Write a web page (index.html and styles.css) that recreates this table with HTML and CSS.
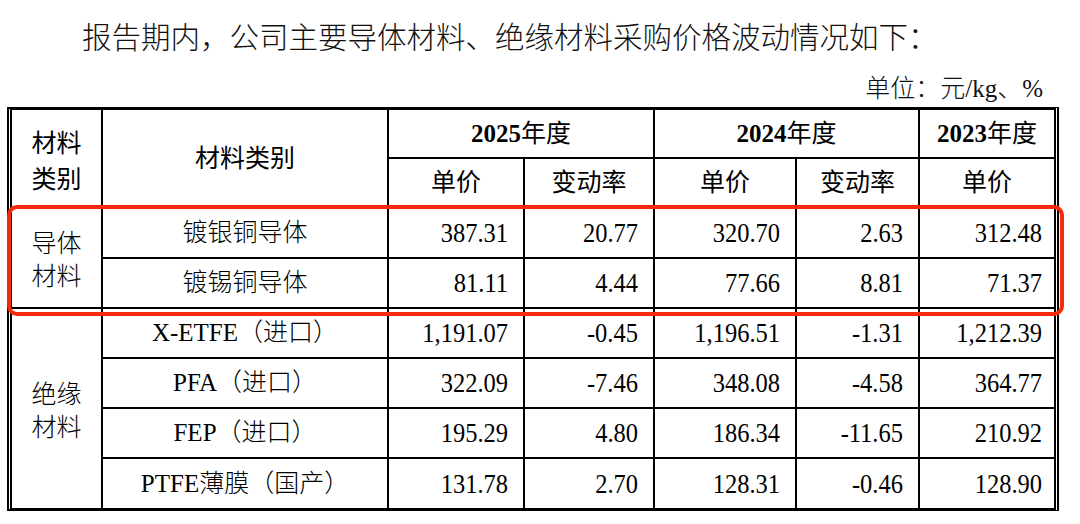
FILE: index.html
```html
<!DOCTYPE html>
<html lang="zh-CN">
<head>
<meta charset="utf-8">
<title>采购价格波动情况</title>
<link rel="stylesheet" href="styles.css">
</head>
<body>
<div class="page">
  <p class="title">报告期内，公司主要导体材料、绝缘材料采购价格波动情况如下：</p>
  <p class="unit">单位：元/kg、%</p>
  <div class="sheet">
    <div class="c h cat rs2">材料<br>类别</div>
    <div class="c h rs2">材料类别</div>
    <div class="c h cs2"><b>2025</b>年度</div>
    <div class="c h cs2"><b>2024</b>年度</div>
    <div class="c h last"><b>2023</b>年度</div>

    <div class="c h">单价</div>
    <div class="c h">变动率</div>
    <div class="c h">单价</div>
    <div class="c h">变动率</div>
    <div class="c h last">单价</div>

    <div class="c cat body rs2">导体<br>材料</div>
    <div class="c name">镀银铜导体</div>
    <div class="c num"><span>387.31</span></div>
    <div class="c num"><span>20.77</span></div>
    <div class="c num"><span>320.70</span></div>
    <div class="c num"><span>2.63</span></div>
    <div class="c num last"><span>312.48</span></div>

    <div class="c name">镀锡铜导体</div>
    <div class="c num"><span>81.11</span></div>
    <div class="c num"><span>4.44</span></div>
    <div class="c num"><span>77.66</span></div>
    <div class="c num"><span>8.81</span></div>
    <div class="c num last"><span>71.37</span></div>

    <div class="c cat body rs4 end">绝缘<br>材料</div>
    <div class="c name">X-ETFE（进口）</div>
    <div class="c num"><span>1,191.07</span></div>
    <div class="c num"><span>-0.45</span></div>
    <div class="c num"><span>1,196.51</span></div>
    <div class="c num"><span>-1.31</span></div>
    <div class="c num last"><span>1,212.39</span></div>

    <div class="c name">PFA（进口）</div>
    <div class="c num"><span>322.09</span></div>
    <div class="c num"><span>-7.46</span></div>
    <div class="c num"><span>348.08</span></div>
    <div class="c num"><span>-4.58</span></div>
    <div class="c num last"><span>364.77</span></div>

    <div class="c name">FEP（进口）</div>
    <div class="c num"><span>195.29</span></div>
    <div class="c num"><span>4.80</span></div>
    <div class="c num"><span>186.34</span></div>
    <div class="c num"><span>-11.65</span></div>
    <div class="c num last"><span>210.92</span></div>

    <div class="c name end">PTFE薄膜（国产）</div>
    <div class="c num end"><span>131.78</span></div>
    <div class="c num end"><span>2.70</span></div>
    <div class="c num end"><span>128.31</span></div>
    <div class="c num end"><span>-0.46</span></div>
    <div class="c num last end"><span>128.90</span></div>
  </div>
  <div class="mark"></div>
</div>
</body>
</html>
```

FILE: styles.css
```css
html, body {
  margin: 0;
  padding: 0;
  background: #fff;
}

body {
  width: 1080px;
  height: 524px;
  overflow: hidden;
  color: #000;
  font-family: "Liberation Serif", "Noto Sans CJK SC", serif;
}

.page {
  position: relative;
  padding: 0 21px 0 7px;
}

.title {
  margin: 0;
  padding: 14px 0 0 75px;
  font-family: "Noto Sans CJK SC", sans-serif;
  font-size: 29.5px;
  font-weight: 300;
  line-height: 42px;
  color: #111;
  white-space: nowrap;
}

.unit {
  margin: 18px 0 0;
  padding-right: 16px;
  text-align: right;
  font-family: "Liberation Serif", "Noto Sans CJK SC", serif;
  font-size: 25px;
  font-weight: 300;
  line-height: 30px;
  color: #111;
}

.sheet {
  margin-top: 3px;
  display: grid;
  grid-template-columns: 91px 286px 136px 130px 142px 123px 134px;
  grid-template-rows: 49px 50px 50px 50px 50px 50px 50px 49px;
  border-top: 3px solid #000;
  border-bottom: 3px solid #000;
  border-left: 5px double #000;
  border-right: 5px double #000;
}

.c {
  box-sizing: border-box;
  display: flex;
  align-items: center;
  justify-content: center;
  border-right: 2px solid #000;
  border-bottom: 2px solid #000;
  font-size: 25px;
  white-space: nowrap;
}

.c.last {
  border-right: none;
}

.c.end {
  border-bottom: none;
}

.rs2 {
  grid-row: span 2;
}

.rs4 {
  grid-row: span 4;
}

.cs2 {
  grid-column: span 2;
}

.h {
  font-family: "Liberation Serif", "Noto Sans CJK SC", sans-serif;
  font-weight: 400;
  line-height: 30px;
}

.h b {
  font-weight: 700;
}

.cat {
  text-align: center;
  font-family: "Noto Sans CJK SC", sans-serif;
  line-height: 36px;
}

.cat.body {
  line-height: 33px;
  font-weight: 300;
}

.name {
  font-family: "Liberation Serif", "Noto Sans CJK SC", serif;
  font-weight: 300;
  line-height: 30px;
}

.num {
  justify-content: flex-end;
  padding-right: 15px;
  font-family: "Liberation Serif", serif;
  line-height: 30px;
}

.num.last {
  padding-right: 12px;
}

.num span {
  display: inline-block;
  font-size: 24.5px;
  transform: scaleY(1.14);
}

.mark {
  position: absolute;
  left: 7px;
  top: 205px;
  width: 1057px;
  height: 111px;
  box-sizing: border-box;
  border: 4px solid #f9290f;
  border-radius: 10px;
}
```
